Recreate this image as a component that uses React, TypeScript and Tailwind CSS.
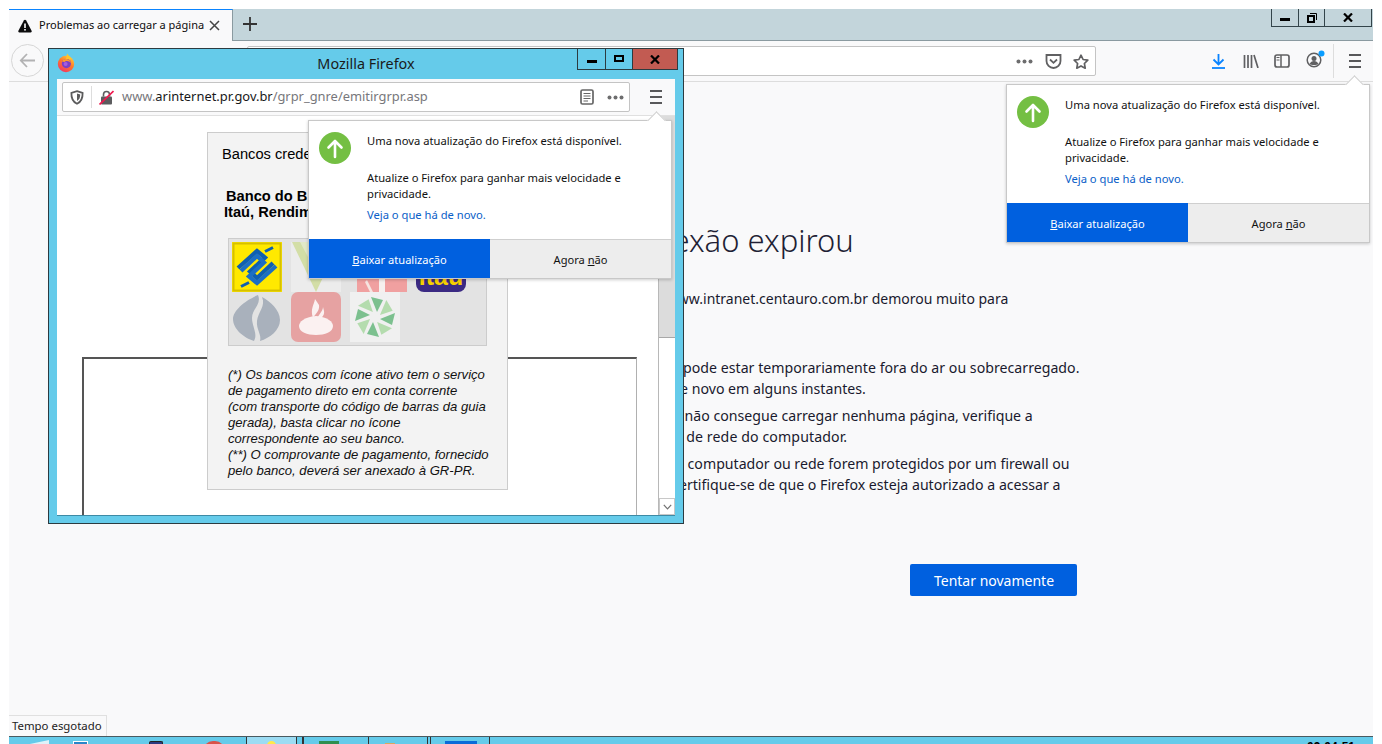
import React from "react";

const UI = { fontFamily: '"Noto Sans", "Open Sans", sans-serif' };
const ARIAL = { fontFamily: '"Liberation Sans", Arial, sans-serif' };

function MenuIcon() {
  return (
    <div className="flex h-[14px] w-[12px] flex-col justify-between">
      <div className="h-[2px] bg-[#58585a]" />
      <div className="h-[2px] bg-[#58585a]" />
      <div className="h-[2px] bg-[#58585a]" />
    </div>
  );
}

function Dots() {
  return (
    <svg width="17" height="5" viewBox="0 0 17 5">
      <circle cx="2.5" cy="2.5" r="2" fill="#6d6d6e" />
      <circle cx="8.5" cy="2.5" r="2" fill="#6d6d6e" />
      <circle cx="14.5" cy="2.5" r="2" fill="#6d6d6e" />
    </svg>
  );
}

function FirefoxLogo() {
  return (
    <svg width="18" height="20" viewBox="0 0 18 20">
      <defs>
        <linearGradient id="ffg" x1="0.8" y1="0" x2="0.2" y2="1">
          <stop offset="0" stopColor="#ffd23a" />
          <stop offset="0.45" stopColor="#ff7a28" />
          <stop offset="1" stopColor="#f0306a" />
        </linearGradient>
      </defs>
      <circle cx="9" cy="11" r="8.2" fill="url(#ffg)" />
      <path d="M10 0.5c1 2 3.5 3 4.6 5.5L9 7z" fill="#ffc52e" />
      <circle cx="9.4" cy="10.6" r="4.6" fill="#7b3fc4" />
      <path d="M5 8.5c1-2.2 3.6-3 6-2 1.6.6 2.8 2 3 3.6-1-1.5-2.4-2.2-4-2.2-1.2 0-2 .4-2.6 1.2z" fill="#ff9a2c" />
      <circle cx="8.6" cy="11" r="2" fill="#a45ce0" />
    </svg>
  );
}

function UpIcon() {
  return (
    <svg width="32" height="32" viewBox="0 0 32 32" className="shrink-0">
      <circle cx="16" cy="16" r="16" fill="#74bf43" />
      <path d="M16 25V9M9.5 15.5 16 9l6.5 6.5" fill="none" stroke="#fff" strokeWidth="2.6" strokeLinecap="round" strokeLinejoin="round" />
    </svg>
  );
}

function UpdatePopup({ className }: { className: string }) {
  return (
    <div
      className={`absolute z-20 h-[159px] w-[364px] border border-[#c8c8c8] bg-white shadow-[0_1px_3px_rgba(0,0,0,0.2)] ${className}`}
      style={UI}
    >
      <div className="absolute right-[8px] top-[-7px] h-[13px] w-[13px] rotate-45 border-l border-t border-[#d0d0d0] bg-white" />
      <div className="relative flex h-[118px] pl-[10px] pt-[11px]">
        <UpIcon />
        <div className="ml-[16px] text-[11.2px] leading-[16px] text-[#111]">
          <div className="mt-[1px]">Uma nova atualização do Firefox está disponível.</div>
          <div className="mt-[21px]">Atualize o Firefox para ganhar mais velocidade e</div>
          <div>privacidade.</div>
          <div className="mt-[5px] text-[#0a60c8]">Veja o que há de novo.</div>
        </div>
      </div>
      <div className="flex h-[39px] text-[11.1px]">
        <div className="flex w-[181px] items-center justify-center bg-[#0060df] pt-[3px] text-white">
          <span><span className="underline">B</span>aixar atualização</span>
        </div>
        <div className="flex flex-1 items-center justify-center border-t border-[#cfcfcf] bg-[#ededed] pt-[2px] text-[#111]">
          <span>Agora <span className="underline">n</span>ão</span>
        </div>
      </div>
    </div>
  );
}

function BBLogo() {
  return (
    <svg width="50" height="50" viewBox="0 0 50 50" className="shrink-0">
      <rect width="50" height="50" fill="#ffe900" />
      <rect x="1.5" y="1.500" width="47" height="47" fill="none" stroke="#d6c000" strokeWidth="2" />
      <g fill="none" stroke="#0f5fb0" strokeWidth="4.200">
        <path d="M6 26 25 9l8 6.500-15 14 7 6.500 16-15" />
        <path d="M44 24 25 41l-8-6.500 15-14-7-6.500-16 15" stroke="#1c6fc4" />
        <path d="M33 9.500l8-4M9 44.500l8-4" strokeWidth="3" />
      </g>
    </svg>
  );
}

function Pinwheel() {
  const angles = [0, 45, 90, 135, 180, 225, 270, 315];
  return (
    <svg width="50" height="50" viewBox="0 0 50 50" className="shrink-0 bg-[#f0f0f0]">
      {angles.map((a, i) => (
        <path
          key={a}
          d="M21 5 33 8 27 20z"
          fill={i % 2 === 0 ? "#7cc08f" : "#b4dcae"}
          transform={`rotate(${a} 25 25)`}
        />
      ))}
    </svg>
  );
}

function LogoGrid() {
  return (
    <div className="ml-[20px] mt-[18px] flex h-[108px] w-[259px] flex-col border border-[#cccccc] bg-[#e3e3e3] pl-[3px] pt-[3px]">
      <div className="flex h-[50px]">
        <BBLogo />
        <svg width="50" height="50" viewBox="0 0 50 50" className="ml-[9px] shrink-0 bg-[#ececec]">
          <path d="M1 0h48L25 50z" fill="#d3dea6" />
          <path d="M9 0h32L25 30z" fill="#e2e9c8" />
        </svg>
        <svg width="50" height="50" viewBox="0 0 50 50" className="ml-[16px] shrink-0">
          <rect width="50" height="50" fill="#f0a0a0" />
          <path d="M10 38 16 50h-3L8 40z" fill="#f6e4e0" />
          <path d="M22 0h6v50h-6z" fill="#f6f0ee" />
        </svg>
        <div className="ml-[9px] flex h-[50px] w-[50px] shrink-0 items-end justify-center overflow-hidden rounded-[8px] bg-[#3b2a83] pb-[1px] text-[25px] font-bold leading-[30px] text-[#f7d000]" style={ARIAL}>
          itaú
        </div>
      </div>
      <div className="flex h-[50px]">
        <svg width="50" height="50" viewBox="0 0 50 50" className="shrink-0">
          <path d="M26 3C14 8 1 18 1 27c0 10 11 19 21 22 4-7-2-15-2-23 0-9 10-14 6-23z" fill="#a9b1bc" />
          <path d="M30 5c4 9-4 15-5 24-1 8 5 14 3 20 10-3 20-11 20-21 0-10-10-19-18-23z" fill="#a9b1bc" />
        </svg>
        <svg width="50" height="50" viewBox="0 0 50 50" className="ml-[9px] shrink-0">
          <rect width="50" height="50" rx="7" fill="#e6a2a2" />
          <path d="M25 24c-12 1-17 6-17 10 0 6 8 9 17 9s17-3 17-9c0-4-5-9-17-10z" fill="#fbf1f1" />
          <path d="M24 7c-1 6-5 10-2 19 2-4 7-7 6-13zM32 15c0 5-6 8-6 14 3-2 8-5 7-10z" fill="#fbf1f1" />
        </svg>
        <div className="ml-[9px]">
          <Pinwheel />
        </div>
      </div>
    </div>
  );
}

function InnerWindow() {
  return (
    <div className="absolute left-[48px] top-[48px] z-10 flex h-[476px] w-[636px] flex-col border border-[#2c3b40] bg-[#65cbea]">
      <div className="relative flex h-[30px] shrink-0 items-center justify-center">
        <div className="absolute left-[8px] top-[4px]">
          <FirefoxLogo />
        </div>
        <span className="text-[14.4px] text-[#1a1a1a]" style={UI}>Mozilla Firefox</span>
        <div className="absolute right-[5px] top-0 flex h-[21px] border-x border-b border-[#2c3b40]">
          <div className="flex w-[28px] items-end justify-center border-r border-[#2c3b40] pb-[6px]">
            <div className="h-[3px] w-[10px] bg-black" />
          </div>
          <div className="flex w-[26px] items-center justify-center pb-[2px]">
            <div className="h-[7px] w-[10px] border-2 border-black" />
          </div>
          <div className="flex w-[45px] items-center justify-center border-l border-[#2c3b40] bg-[#c25b52]">
            <svg width="10" height="9" viewBox="0 0 10 9"><path d="M1 .5l8 8M9 .5l-8 8" stroke="#000" strokeWidth="2.2" /></svg>
          </div>
        </div>
      </div>
      <div className="mx-[8px] mb-[7px] flex min-h-0 flex-1 flex-col border-b border-[#3d8aa5] bg-white">
        <div className="flex h-[37px] shrink-0 items-start border-b border-[#e0e0e0] bg-[#f9f9fa] pl-[5px] pt-[3px]">
          <div className="flex h-[30px] w-[568px] items-center rounded-[2px] border border-[#c4c4c4] bg-white">
            <svg width="14" height="15" viewBox="0 0 14 15" className="ml-[7px]">
              <path d="M7 1.2 12.6 3c.2 5-1.3 8.8-5.6 10.8C2.7 11.8 1.2 8 1.4 3z" fill="none" stroke="#5b5b5c" strokeWidth="1.8" />
              <path d="M7 3.6 10.2 4.6C10.2 7.6 9.4 9.8 7 11z" fill="#5b5b5c" />
            </svg>
            <div className="ml-[7px] h-[22px] w-px bg-[#dddddd]" />
            <svg width="15" height="15" viewBox="0 0 15 15" className="ml-[7px]">
              <rect x="2" y="6.5" width="11" height="8" rx="1" fill="#5c5c5e" />
              <path d="M4.5 6.5V4.5a3 3 0 0 1 6 0v2" fill="none" stroke="#5c5c5e" strokeWidth="1.6" />
              <path d="M0.5 14.5 14.5 1" stroke="#f01a50" strokeWidth="1.7" />
            </svg>
            <span className="ml-[8px] text-[12.9px] text-[#77777c]" style={UI}>
              www.<span className="text-[#18181a]">arinternet.pr.gov.br</span>/grpr_gnre/emitirgrpr.asp
            </span>
            <div className="ml-auto mr-[5px] flex items-center gap-[13px]">
              <svg width="14" height="16" viewBox="0 0 14 16">
                <rect x="1" y="1" width="12" height="14" rx="1.5" fill="none" stroke="#666" strokeWidth="1.7" />
                <path d="M3.5 4.5h7M3.5 7h7M3.5 9.5h7M3.5 12h4.5" stroke="#666" strokeWidth="1" />
              </svg>
              <Dots />
            </div>
          </div>
          <div className="ml-[20px] mt-[8px]">
            <MenuIcon />
          </div>
        </div>
        <div className="relative flex min-h-0 flex-1 overflow-hidden bg-white">
          <div className="relative min-w-0 flex-1 pl-[25px] pt-[241px]">
            <div className="h-[300px] w-[555px] border-l-2 border-r border-t-2 border-l-[#555555] border-r-[#b0b0b0] border-t-[#555555]" />
            <div className="absolute left-[150px] top-[16px] h-[358px] w-[301px] border border-[#cccccc] bg-[#f3f3f3]" style={ARIAL}>
              <div className="ml-[14px] mt-[13px] text-[14.67px] leading-[16px] text-black">Bancos credenciados</div>
              <div className="ml-[18px] mt-[26px] whitespace-nowrap text-[14.67px] font-bold leading-[16px] text-black">
                Banco do Brasil, Santander<br />
                <span className="-ml-[2px]">Itaú, Rendimento, Sicredi</span>
              </div>
              <LogoGrid />
              <div className="ml-[20px] mt-[21px] whitespace-nowrap text-[13.1px] italic leading-[16px] text-[#111]">
                (*) Os bancos com ícone ativo tem o serviço<br />
                de pagamento direto em conta corrente<br />
                (com transporte do código de barras da guia<br />
                gerada), basta clicar no ícone<br />
                correspondente ao seu banco.<br />
                (**) O comprovante de pagamento, fornecido<br />
                pelo banco, deverá ser anexado à GR-PR.
              </div>
            </div>
          </div>
          <div className="flex w-[17px] shrink-0 flex-col border-l border-[#b8b8b8] bg-white">
            <div className="h-[222px] shrink-0 border-b border-[#a8a8a8] bg-[#dcdcdc]" />
            <div className="flex-1" />
            <div className="flex h-[17px] shrink-0 items-center justify-center border border-[#c8c8c8] bg-white">
              <svg width="9" height="6" viewBox="0 0 9 6"><path d="M.8.8 4.5 4.800 8.200.8" fill="none" stroke="#707070" strokeWidth="1.2" /></svg>
            </div>
          </div>
        </div>
      </div>
    </div>
  );
}

function TaskbarIcons() {
  return (
    <div className="relative flex h-full items-start overflow-hidden">
      <svg width="26" height="7" viewBox="0 0 26 7" className="ml-[16px] mt-[1px]"><path d="M0 7 24 2v5z" fill="#dff2f9" /></svg>
      <div className="ml-[22px] mt-[4px] h-[8px] w-[15px] border-t border-x border-white bg-[#2a86c8]" />
      <div className="ml-[61px] mt-[4px] h-[8px] w-[14px] rounded-t-[2px] border-x border-t border-[#222] bg-[#2a3a80]" />
      <div className="ml-[40px] mt-[4px] h-[20px] w-[22px] rounded-full bg-[#d9534a]" />
      <div className="ml-[21px] flex h-[8px] w-[51px] justify-center border-x border-[#333] bg-[#9cdcf3] pt-[4px]">
        <div className="h-[6px] w-[9px] rounded-t-full bg-[#ffe94a]" />
      </div>
      <div className="ml-[2px] h-[8px] w-[4px] border-r border-[#333]" />
      <div className="h-[8px] w-[65px] border-l border-[#333] pl-[15px] pt-[4px]">
        <div className="h-[4px] w-[20px] bg-[#2f8f50]" />
      </div>
      <div className="h-[8px] w-[59px] border-l border-[#333] pl-[16px] pt-[6px]">
        <div className="h-[2px] w-[10px] bg-[#d8a860]" />
      </div>
      <div className="h-[8px] w-[3px] border-l border-[#333]" />
      <div className="h-[8px] w-[59px] border-l border-[#333] pl-[14px] pt-[4px]">
        <div className="h-[4px] w-[32px] bg-[#0a6bd8]" />
      </div>
      <div className="h-[8px] border-l border-[#333]" />
      <div className="absolute right-[18px] top-[4px] text-[12px] font-bold leading-[12px] text-black" style={ARIAL}>09:04:51</div>
    </div>
  );
}

export default function App() {
  return (
    <div className="relative flex h-[744px] w-[1382px] flex-col overflow-hidden bg-white px-[9px] pt-[9px]" style={UI}>
      {/* Tab strip */}
      <div className="flex h-[32px] shrink-0 border-b border-[#8a9aa0] bg-[#c3d5db]">
        <div className="mb-[-1px] flex h-[32px] w-[224px] items-center border-r border-t border-r-[#8a9aa0] border-t-[#0a84ff] bg-[#f9f9fa] pl-[9px]">
          <svg width="14" height="14" viewBox="0 0 14 14">
            <path d="M7 .8c.5 0 .9.3 1.200.8l5.400 10.200c.4.800 0 1.600-1 1.600H1.400c-1 0-1.400-.8-1-1.600L5.800 1.600C6.100 1.100 6.500.8 7 .8z" fill="#0c0c0d" />
            <rect x="6.200" y="4.500" width="1.600" height="4.500" fill="#fff" />
            <rect x="6.200" y="10" width="1.600" height="1.600" fill="#fff" />
          </svg>
          <span className="ml-[7px] whitespace-nowrap text-[11px] text-[#0c0c0d]">Problemas ao carregar a página</span>
          <svg width="11" height="11" viewBox="0 0 11 11" className="ml-[5px]">
            <path d="M1 1l9 9M10 1l-9 9" stroke="#444" strokeWidth="1.5" />
          </svg>
        </div>
        <div className="ml-[10px] flex items-center pb-[1px]">
          <svg width="14" height="14" viewBox="0 0 14 14"><path d="M7 0v14M0 7h14" stroke="#333" strokeWidth="1.8" /></svg>
        </div>
        <div className="ml-auto mr-[1px] flex h-[18px] border-x border-b border-[#33444a] text-black">
          <div className="flex w-[27px] items-end justify-center border-r border-[#33444a] pb-[5px]">
            <div className="h-[3px] w-[10px] bg-black" />
          </div>
          <div className="flex w-[26px] items-center justify-center border-r border-[#33444a]">
            <svg width="10" height="10" viewBox="0 0 10 10">
              <rect x="1" y="3" width="6" height="6" fill="none" stroke="#000" strokeWidth="2" />
              <path d="M3 .5h6.500V7" fill="none" stroke="#000" strokeWidth="1" />
            </svg>
          </div>
          <div className="flex w-[46px] items-center justify-center">
            <svg width="10" height="9" viewBox="0 0 10 9"><path d="M1 .5l8 8M9 .5l-8 8" stroke="#000" strokeWidth="2.200" /></svg>
          </div>
        </div>
      </div>

      {/* Toolbar */}
      <div className="flex h-[41px] shrink-0 items-start border-b border-[#dddddd] bg-[#f9f9fa]">
        <div className="ml-[2px] mt-[3px] flex h-[33px] w-[33px] items-center justify-center rounded-full border border-[#d6d6d6]">
          <svg width="17" height="15" viewBox="0 0 17 15"><path d="M16 7.500H2M8 1 1.800 7.500 8 14" fill="none" stroke="#b2b2b3" strokeWidth="1.800" /></svg>
        </div>
        <div className="ml-[203px] mt-[5px] flex h-[30px] w-[849px] items-center justify-end rounded-[2px] border border-[#c4c4c4] bg-white pr-[6px]">
          <Dots />
          <svg width="17" height="15" viewBox="0 0 17 15" className="ml-[12px]">
            <path d="M1.500 1h14v6a7 7 0 0 1-14 0z" fill="none" stroke="#606062" strokeWidth="1.800" />
            <path d="M5 5.500l3.500 3.300L12 5.500" fill="none" stroke="#606062" strokeWidth="1.800" />
          </svg>
          <svg width="16" height="15" viewBox="0 0 16 15" className="ml-[11px]">
            <path d="M8 1.200l2.100 4.300 4.700.7-3.400 3.300.8 4.700L8 11.900l-4.200 2.300.8-4.700L1.200 6.200l4.700-.7z" fill="none" stroke="#606062" strokeWidth="1.700" strokeLinejoin="round" />
          </svg>
        </div>
        <div className="ml-[115px] mt-[12px] flex items-center">
          <svg width="15" height="15" viewBox="0 0 15 15">
            <path d="M7.500 0v10M2.500 5.500l5 5 5-5" fill="none" stroke="#0a84ff" strokeWidth="1.800" />
            <path d="M1 14h13" stroke="#0a84ff" strokeWidth="1.800" />
          </svg>
          <svg width="16" height="14" viewBox="0 0 16 14" className="ml-[17px]">
            <path d="M1.500 1v13M5 1v13M8.500 1v13M11 1l4 13" fill="none" stroke="#606062" strokeWidth="1.700" />
          </svg>
          <svg width="16" height="14" viewBox="0 0 16 14" className="ml-[15px]">
            <rect x="1" y="1" width="14" height="12" rx="2" fill="none" stroke="#606062" strokeWidth="1.700" />
            <path d="M7 1v12" stroke="#606062" strokeWidth="1.500" />
            <path d="M2.500 3.500h3M2.500 6h3" stroke="#606062" strokeWidth="1" />
          </svg>
          <svg width="19" height="19" viewBox="0 0 19 19" className="ml-[16px] -mt-[3px]">
            <circle cx="8" cy="10" r="6.800" fill="none" stroke="#606062" strokeWidth="1.500" />
            <circle cx="8" cy="8.500" r="2.500" fill="#606062" />
            <path d="M3.500 14c1-2 2.500-3 4.500-3s3.500 1 4.500 3c-1.500 1.300-7.500 1.300-9 0z" fill="#606062" />
            <circle cx="15.500" cy="3.500" r="3" fill="#0a9dff" />
          </svg>
          <div className="ml-[8px] -mt-[10px] -mb-[10px] h-[34px] w-px bg-[#dddddd]" />
          <div className="ml-[15px]">
            <MenuIcon />
          </div>
        </div>
      </div>

      {/* Page content */}
      <div className="min-h-0 flex-1 bg-[#f9f9fa] pl-[561px] pt-[138px] text-[#1a1a2e]">
        <h1 className="h-[40px] whitespace-nowrap pl-[24px] text-[31px] font-light leading-[40px] text-[#1f1f35]">A conexão expirou</h1>
        <p className="mt-[29px] whitespace-nowrap text-[14px] leading-[20.5px]">
          O servidor em www.intranet.centauro.com.br demorou muito para<br />responder.
        </p>
        <ul className="mt-[28px] flex flex-col gap-[7px] whitespace-nowrap pl-[61px] text-[14.15px] leading-[20.5px]">
          <li><span className="pl-[10px] tracking-[0.02px]">O site pode estar temporariamente fora do ar ou sobrecarregado.</span><br />Tente de novo em alguns instantes.</li>
          <li>Se você não consegue carregar nenhuma página, verifique a<br /><span className="-ml-[5px] tracking-[0.1px]">conexão de rede do computador.</span></li>
          <li><span className="pl-[10px]">Se seu computador ou rede forem protegidos por um firewall ou</span><br /><span className="-ml-[3px]">proxy, certifique-se de que o Firefox esteja autorizado a acessar a</span><br />Web.</li>
        </ul>
        <div className="ml-[340px] mt-[48px] flex h-[32px] w-[167px] items-center justify-center rounded-[2px] bg-[#0060df] pl-[1px] pt-[1px] text-[14px] text-white">
          Tentar novamente
        </div>
      </div>

      {/* Taskbar */}
      <div className="h-[8px] shrink-0 border-t border-[#4a5a60] bg-[#65cbea]">
        <TaskbarIcons />
      </div>

      {/* Status panel */}
      <div className="absolute bottom-[8px] left-[9px] z-10 flex h-[21px] w-[98px] items-center border-r border-t border-[#e0e0e0] bg-[#f9f9fa] pl-[3px] text-[11.4px] text-[#222]">
        Tempo esgotado
      </div>

      <InnerWindow />
      <UpdatePopup className="left-[308px] top-[120px]" />
      <UpdatePopup className="left-[1006px] top-[84px]" />
    </div>
  );
}
